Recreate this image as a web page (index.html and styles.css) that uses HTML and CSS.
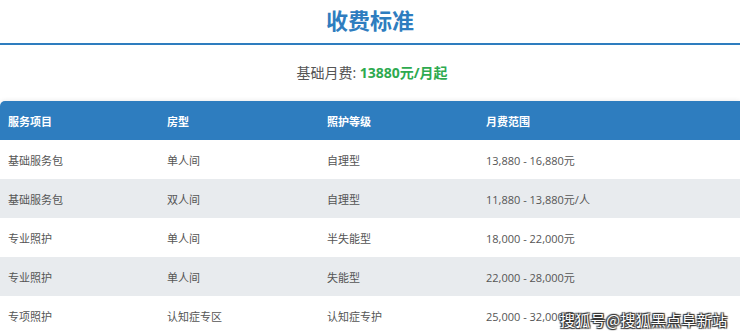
FILE: index.html
```html
<!DOCTYPE html>
<html lang="zh">
<head>
<meta charset="utf-8">
<title>收费标准</title>
<link rel="stylesheet" href="styles.css">
</head>
<body>
<div class="page">
  <h1 class="title">收费标准</h1>
  <p class="base">基础月费: <strong class="price">13880元/月起</strong></p>
  <div class="table">
    <div class="row head">
      <div class="cell">服务项目</div>
      <div class="cell">房型</div>
      <div class="cell">照护等级</div>
      <div class="cell">月费范围</div>
    </div>
    <div class="row">
      <div class="cell">基础服务包</div>
      <div class="cell">单人间</div>
      <div class="cell">自理型</div>
      <div class="cell">13,880 - 16,880元</div>
    </div>
    <div class="row alt">
      <div class="cell">基础服务包</div>
      <div class="cell">双人间</div>
      <div class="cell">自理型</div>
      <div class="cell">11,880 - 13,880元/人</div>
    </div>
    <div class="row">
      <div class="cell">专业照护</div>
      <div class="cell">单人间</div>
      <div class="cell">半失能型</div>
      <div class="cell">18,000 - 22,000元</div>
    </div>
    <div class="row alt">
      <div class="cell">专业照护</div>
      <div class="cell">单人间</div>
      <div class="cell">失能型</div>
      <div class="cell">22,000 - 28,000元</div>
    </div>
    <div class="row">
      <div class="cell">专项照护</div>
      <div class="cell">认知症专区</div>
      <div class="cell">认知症专护</div>
      <div class="cell">25,000 - 32,000元</div>
    </div>
  </div>
  <div class="watermark">搜狐号@搜狐黑点阜新站</div>
</div>
</body>
</html>
```
FILE: styles.css
```css
html, body {
  margin: 0;
  padding: 0;
  background: #ffffff;
}
body {
  width: 740px;
  height: 334px;
  overflow: hidden;
  font-family: "Open Sans", "Noto Sans CJK SC", sans-serif;
  color: #555555;
}
.page {
  position: relative;
  height: 334px;
}
.title {
  margin: 0;
  height: 41px;
  padding-top: 2px;
  line-height: 34px;
  text-align: center;
  font-size: 22px;
  font-weight: 700;
  color: #2e7dbf;
  font-family: "Noto Sans CJK SC", sans-serif;
  border-bottom: 2px solid #2e7dbf;
}
.base {
  margin: 0;
  height: 56px;
  line-height: 56px;
  text-align: center;
  font-size: 14px;
  color: #555555;
  padding-left: 4px;
}
.price {
  color: #2eaa4f;
  font-weight: 700;
}
.table {
  border-radius: 5px 0 0 0;
  overflow: hidden;
  box-shadow: 0 0 5px rgba(0, 0, 0, 0.1);
}
.row {
  display: grid;
  grid-template-columns: 159px 160px 159px 1fr;
  height: 39px;
  align-items: center;
  font-size: 11px;
  background: #ffffff;
}
.row.alt {
  background: #e8ebee;
}
.row.head {
  background: #2e7dbf;
  color: #ffffff;
  font-weight: 700;
}
.cell {
  padding-left: 8px;
  white-space: nowrap;
}
.watermark {
  position: absolute;
  left: 560px;
  top: 309px;
  font-size: 15px;
  font-family: "Noto Sans CJK SC", sans-serif;
  color: #ffffff;
  letter-spacing: 0.3px;
  text-shadow: 0 0 1px #333, 1px 1px 1px #333, -1px -1px 1px #333, 1px -1px 1px #333, -1px 1px 1px #333;
}
```
